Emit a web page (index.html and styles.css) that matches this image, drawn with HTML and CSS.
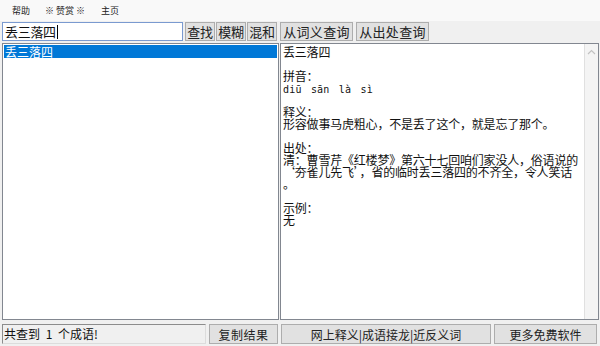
FILE: index.html
```html
<!DOCTYPE html>
<html lang="zh-CN">
<head>
<meta charset="utf-8">
<title>成语词典</title>
<link rel="stylesheet" href="styles.css">
</head>
<body>
<div class="app">
  <div class="menubar">
    <span class="menu-item">帮助</span>
    <span class="menu-item">※ 赞赏 ※</span>
    <span class="menu-item">主页</span>
  </div>
  <div class="toolbar">
    <div class="search"><span class="search-text">丢三落四</span><span class="caret"></span></div>
    <div class="btn btn-sm btn-first">查找</div>
    <div class="btn btn-sm">模糊</div>
    <div class="btn btn-sm">混和</div>
    <div class="btn btn-md btn-gap">从词义查询</div>
    <div class="btn btn-md">从出处查询</div>
  </div>
  <div class="main">
    <div class="list">
      <div class="list-item selected">丢三落四</div>
    </div>
    <div class="detail">
      <div class="detail-text">
        <div class="line">丢三落四</div>
        <div class="line">&nbsp;</div>
        <div class="line">拼音：</div>
        <div class="line"><span class="pinyin">diū sān là sì</span></div>
        <div class="line">&nbsp;</div>
        <div class="line">释义：</div>
        <div class="line">形容做事马虎粗心，不是丢了这个，就是忘了那个。</div>
        <div class="line">&nbsp;</div>
        <div class="line">出处：</div>
        <div class="line">清：曹雪芹《红楼梦》第六十七回咱们家没人，俗语说的</div>
        <div class="line">‘夯雀儿先飞’，省的临时丢三落四的不齐全，令人笑话</div>
        <div class="line">。</div>
        <div class="line">&nbsp;</div>
        <div class="line">示例：</div>
        <div class="line">无</div>
      </div>
      <div class="scrollbar">
        <svg class="arrow" width="9" height="6" viewBox="0 0 9 6"><path d="M1 5 L4.5 1.5 L8 5" fill="none" stroke="#c2c2c2" stroke-width="1.2"/></svg>
      </div>
    </div>
  </div>
  <div class="footer">
    <div class="status">共查到 1 个成语!</div>
    <div class="btn fbtn fbtn-copy">复制结果</div>
    <div class="btn fbtn fbtn-links">网上释义|成语接龙|近反义词</div>
    <div class="btn fbtn fbtn-more">更多免费软件</div>
  </div>
</div>
</body>
</html>
```
FILE: styles.css
```css
html, body {
  margin: 0;
  padding: 0;
}
body {
  width: 600px;
  height: 346px;
  background: #f0f0f0;
  font-family: "Noto Sans CJK SC", "Noto Sans", sans-serif;
  color: #111;
  overflow: hidden;
}
.app {
  display: flex;
  flex-direction: column;
  height: 346px;
}
.menubar {
  height: 21px;
  background: #f9f9f9;
  display: flex;
  align-items: center;
  gap: 15px;
  padding-left: 12px;
  font-size: 9px;
  color: #222;
}
.menu-item {
  line-height: 12px;
}
.menu-item:nth-child(3) {
  margin-left: 1px;
}
.toolbar {
  display: flex;
  height: 19px;
  margin-top: 1px;
  padding-left: 2px;
}
.search {
  width: 177px;
  height: 17px;
  border: 1px solid #7a9ad0;
  background: #fff;
  display: flex;
  align-items: center;
  font-size: 13px;
  padding-left: 2px;
  box-sizing: content-box;
}
.search-text {
  line-height: 17px;
  letter-spacing: -0.3px;
}
.caret {
  width: 1px;
  height: 14px;
  background: #000;
  margin-left: 1px;
}
.btn {
  display: flex;
  align-items: center;
  justify-content: center;
  background: #e1e1e1;
  border: 1px solid #adadad;
  box-sizing: border-box;
  font-size: 13px;
  color: #222;
  white-space: nowrap;
}
.btn-sm {
  width: 30px;
  height: 19px;
  margin-left: 1px;
  letter-spacing: -0.3px;
}
.btn-first {
  margin-left: 2px;
}
.btn-md {
  width: 73px;
  height: 19px;
  margin-left: 3px;
  letter-spacing: 0.3px;
}
.btn-gap {
  margin-left: 3px;
}
.main {
  display: flex;
  height: 277px;
  margin-top: 2px;
  padding-left: 2px;
}
.list {
  width: 277px;
  background: #fff;
  border: 1px solid #828790;
  box-sizing: border-box;
  padding: 1px;
}
.list-item {
  height: 13px;
  line-height: 13px;
  font-size: 12px;
  padding-left: 1px;
}
.list-item.selected {
  background: #0078d7;
  color: #fff;
}
.detail {
  width: 319px;
  margin-left: 1px;
  background: #fff;
  border: 1px solid #828790;
  box-sizing: border-box;
  display: flex;
}
.detail-text {
  flex: 1;
  padding: 2px 0 0 2px;
  font-size: 12px;
  line-height: 12px;
  white-space: nowrap;
  letter-spacing: -0.2px;
}
.line {
  height: 12px;
}
.pinyin {
  font-family: "DejaVu Sans Mono", "Liberation Mono", monospace;
  font-size: 10px;
  letter-spacing: 0.2px;
  word-spacing: 3px;
}
.scrollbar {
  width: 14px;
  background: #f4f4f4;
  border-left: 1px solid #e0e0e0;
  display: flex;
  flex-direction: column;
  align-items: center;
  padding-top: 5px;
  box-sizing: border-box;
}
.footer {
  display: flex;
  align-items: center;
  height: 20px;
  margin-top: 4px;
  padding-left: 2px;
}
.status {
  width: 204px;
  height: 20px;
  border: 1px solid #8c8c8c;
  border-right-color: #dcdcdc;
  border-bottom-color: #dcdcdc;
  box-sizing: border-box;
  font-size: 12px;
  line-height: 18px;
  padding-left: 1px;
  white-space: nowrap;
  word-spacing: 3px;
}
.fbtn {
  height: 20px;
  font-size: 12px;
}
.fbtn-copy {
  width: 69px;
  margin-left: 3px;
  letter-spacing: 0.5px;
}
.fbtn-links {
  width: 210px;
  margin-left: 3px;
}
.fbtn-more {
  width: 103px;
  margin-left: 3px;
}
```
